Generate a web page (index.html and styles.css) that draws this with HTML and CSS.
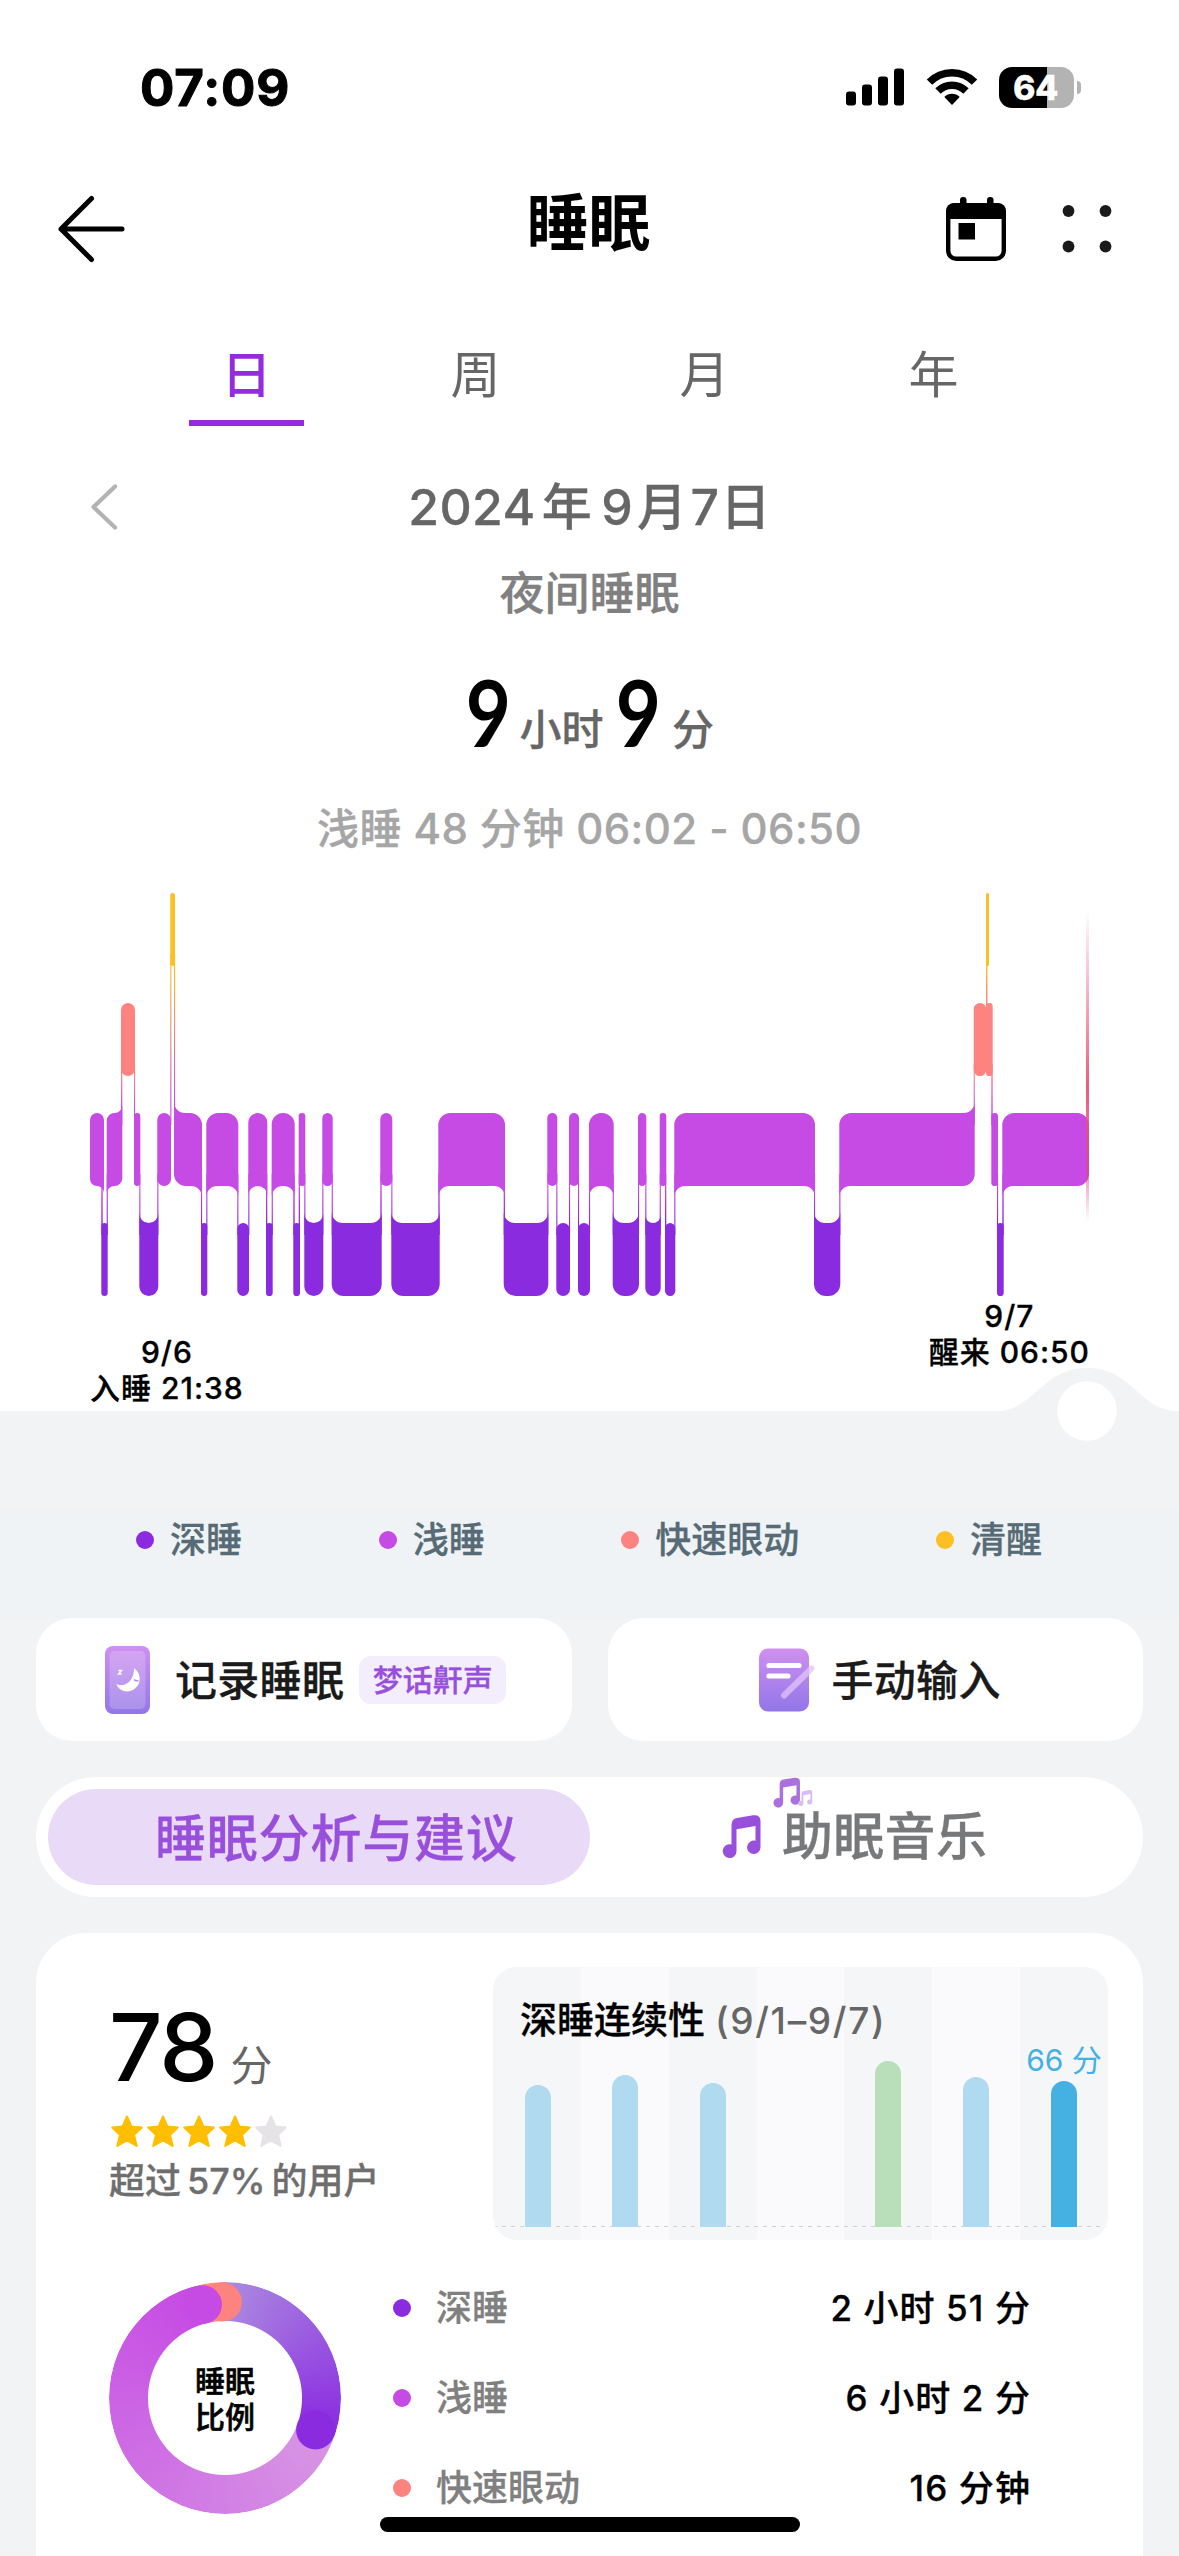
FILE: index.html
```html
<!DOCTYPE html>
<html lang="zh-CN">
<head>
<meta charset="utf-8">
<title>睡眠</title>
<link rel="stylesheet" href="styles.css">
</head>
<body>
<div class="screen">
  <header class="status">
    <span class="clock">07:09</span>
    <span class="status-icons">
      <svg class="signal" width="58" height="38" viewBox="0 0 58 38"><rect x="0" y="23.500" width="10" height="14" rx="3"/><rect x="16" y="16.500" width="10" height="21" rx="3"/><rect x="32" y="8.500" width="10" height="29" rx="3"/><rect x="48" y="0.500" width="10" height="37" rx="3"/></svg>
      <svg class="wifi" width="52" height="38" viewBox="0 0 52 38"><g fill="none" stroke="#000" stroke-width="7.600"><path d="M3.500 14.200A31.500 31.500 0 0 1 48.500 14.200"/><path d="M12 23A19.800 19.800 0 0 1 40 23"/></g><path d="M18.300 29A11 11 0 0 1 33.700 29L26 37z"/></svg>
      <span class="battery"><span class="battery-body">64</span><i class="battery-nub"></i></span>
    </span>
  </header>

  <nav class="nav">
    <svg class="back" width="70" height="70" viewBox="0 0 70 70"><path d="M35.500 4.500L5 35l30.500 30.500M5 35h61" fill="none" stroke="#000" stroke-width="5" stroke-linecap="round" stroke-linejoin="round"/></svg>
    <h1 class="title">睡眠</h1>
    <div class="nav-actions">
      <svg width="60" height="64" viewBox="0 0 60 64"><rect x="2.200" y="8.200" width="55.600" height="53.600" rx="8" fill="none" stroke="#000" stroke-width="4.400"/><path d="M0 22V14a8 8 0 0 1 8-8h44a8 8 0 0 1 8 8v8z"/><rect x="14" y="0" width="6.500" height="12" rx="3"/><rect x="41" y="0" width="6.500" height="12" rx="3"/><rect x="12.500" y="26" width="16.500" height="16.500"/></svg>
      <svg width="50" height="48" viewBox="0 0 50 48" fill="#1a1a1a"><circle cx="6.500" cy="6" r="5.900"/><circle cx="43.500" cy="6" r="5.900"/><circle cx="6.500" cy="41.500" r="5.900"/><circle cx="43.500" cy="41.500" r="5.900"/></svg>
    </div>
  </nav>

  <div class="tabs">
    <div class="tab tab-on">日</div><div class="tab">周</div><div class="tab">月</div><div class="tab">年</div>
  </div>

  <div class="date-row">
    <svg class="prev" width="28" height="46" viewBox="0 0 28 46"><path d="M25 2.500L3.500 23 25 43.500" fill="none" stroke="#b3b3b3" stroke-width="4.200" stroke-linecap="round" stroke-linejoin="round"/></svg>
    <span class="date">2024<b class="year">年</b>9<b class="month">月</b>7<b class="date-day">日</b></span>
  </div>
  <div class="kind">夜间睡眠</div>
  <div class="total"><span class="big hours">9</span><span class="unit">小时</span><span class="big">9</span><span class="unit">分</span></div>
  <div class="detail">浅睡 48 分钟 06:02 - 06:50</div>

  <svg class="stages" id="stages" width="1179" height="421" viewBox="0 877 1179 421">
    <defs>
      <linearGradient id="cursor" x1="0" y1="0" x2="0" y2="1"><stop offset="0" stop-color="#ec5a7c" stop-opacity="0"/><stop offset=".57" stop-color="#ec5a7c"/><stop offset=".85" stop-color="#d8487c" stop-opacity=".55"/><stop offset="1" stop-color="#ec5a7c" stop-opacity="0"/></linearGradient>
    </defs>
  </svg>
  <div class="ends">
    <div class="end end-start">9/6<br>入睡 21:38</div>
    <div class="end">9/7<br>醒来 06:50</div>
  </div>

  <main class="lower">
    <svg class="handle" width="184" height="76" viewBox="0 0 184 76"><path d="M0 43.500C40 43 46 0 92 0S144 43 184 43.500z" fill="#f1f3f5"/><circle cx="92" cy="43" r="29.800" fill="#fff"/></svg>
    <div class="legend">
      <span class="key deep">深睡</span><span class="key light">浅睡</span><span class="key rem">快速眼动</span><span class="key awake">清醒</span>
    </div>

    <div class="actions">
      <div class="action">
        <svg class="phone" width="46" height="68" viewBox="0 0 46 68">
          <defs><linearGradient id="lilac" x1="0" y1="0" x2="0" y2="1"><stop offset="0" stop-color="#cf90f0"/><stop offset="1" stop-color="#9276e8"/></linearGradient></defs>
          <rect width="45" height="68" rx="8" fill="url(#lilac)"/><rect x="4.500" y="5" width="36" height="58" rx="5" fill="#fff" opacity=".2"/>
          <path d="M29 22c8 6 7 16 1 20.500C24 47.500 14 46 11.500 38c7 4 18-2 17.500-16z" fill="#fff"/><path d="M29 33.500q2 2 4.500 1" stroke="#b08ae8" stroke-width="1.500" fill="none"/><path d="M13.500 24.500h3l-3 3.500h3" fill="none" stroke="#fff" stroke-width="1.400"/>
        </svg>
        <span class="action-text">记录睡眠</span><span class="tag">梦话鼾声</span>
      </div>
      <div class="action action-manual">
        <svg class="note-pad" width="56" height="64" viewBox="0 0 56 64"><rect y="0.500" width="50" height="63" rx="9" fill="url(#lilac)"/><path d="M10 17.500h30M10 28h19" stroke="#fff" stroke-width="5.200" stroke-linecap="round"/><path d="M25 47.500L52.500 20.500" stroke="#e2c4fa" stroke-opacity=".75" stroke-width="6" stroke-linecap="round"/></svg>
        <span class="action-text">手动输入</span>
      </div>
    </div>

    <div class="switch">
      <div class="switch-on">睡眠分析与建议</div>
      <div class="switch-off">
        <svg width="40" height="44" viewBox="0 0 40 44"><path d="M9.500 33V10q0-6 5.500-7L31 .3Q38.500-.5 38.500 6v26a6.700 6.700 0 1 1-5-6.200V11l-19 3.200V36a6.900 6.900 0 1 1-5-6.500z" fill="#984fdc"/></svg>
        <span>助眠音乐</span>
        <svg class="notes" width="42" height="32" viewBox="0 0 42 32"><path d="M9.500 33V10q0-6 5.500-7L31 .3Q38.500-.5 38.500 6v26a6.700 6.700 0 1 1-5-6.200V11l-19 3.200V36a6.900 6.900 0 1 1-5-6.500z" transform="translate(0 .5) scale(.7)" fill="#aa70de"/><path d="M9.500 33V10q0-6 5.500-7L31 .3Q38.500-.5 38.500 6v26a6.700 6.700 0 1 1-5-6.200V11l-19 3.200V36a6.900 6.900 0 1 1-5-6.500z" transform="translate(25 13) scale(.37)" fill="#d8bdf2"/></svg>
      </div>
    </div>

    <section class="card">
      <div class="card-top">
        <div class="score-box">
          <div class="score"><b>78</b><span>分</span></div>
          <svg class="stars" width="180" height="34" viewBox="0 0 180 34">
            <defs><path id="star" d="M17 1.500l4.400 10 10.400 1-7.700 7.400L26.700 31 17 25.400 7.300 31l2.600-11.100-7.700-7.400 10.400-1z" stroke-width="2" stroke-linejoin="round"/></defs>
            <g fill="#ffbf00" stroke="#ffbf00"><use href="#star"/><use href="#star" x="36"/><use href="#star" x="72"/><use href="#star" x="108"/></g><use href="#star" x="144" fill="#e5e3e5" stroke="#e5e3e5"/>
          </svg>
          <div class="rank">超过<i></i>57%<i></i>的用户</div>
        </div>
        <div class="trend">
          <div class="trend-title">深睡连续性 <span>(9/1–9/7)</span></div>
          <div class="trend-bars">
            <div class="day"><i style="height:142px"></i></div><div class="day"><i style="height:152px"></i></div><div class="day"><i style="height:144px"></i></div><div class="day"></div><div class="day"><i class="good" style="height:166px"></i></div><div class="day"><i style="height:150px"></i></div><div class="day"><em>66 分</em><i class="now" style="height:146px"></i></div>
          </div>
        </div>
      </div>
      <div class="card-bottom">
        <div class="donut">
          <div class="ring"></div>
          <svg class="caps" width="232" height="232" viewBox="0 0 232 232"><circle cx="206.500" cy="148" r="19.400" fill="#8a2be0"/><circle cx="113.500" cy="20" r="19.400" fill="#fd8380"/><circle cx="93.600" cy="22.600" r="19.400" fill="#c64ae4"/></svg>
          <div class="donut-text">睡眠<br>比例</div>
        </div>
        <div class="rows">
          <div class="row"><span class="key deep">深睡</span><b>2 小时 51 分</b></div>
          <div class="row"><span class="key light">浅睡</span><b>6 小时 2 分</b></div>
          <div class="row"><span class="key rem">快速眼动</span><b>16 分钟</b></div>
        </div>
      </div>
    </section>
  </main>
  <div class="home-bar"></div>
</div>
<script src="stages.js"></script>
</body>
</html>
```
FILE: styles.css
```css
* { box-sizing: border-box; }
body {
  margin: 0;
  background: #fff;
  color: #000;
  font-family: Inter, "Noto Sans CJK SC", sans-serif;
  font-weight: 500;
  -webkit-text-stroke: .3px currentColor;
}
svg { display: block; flex: none; }
i, em { font-style: normal; }
.screen { position: relative; width: 1179px; height: 2556px; overflow: hidden; }

/* status bar */
.status { height: 174px; display: flex; justify-content: space-between; align-items: center; padding: 0 98px 0 140px; }
.clock { font-size: 51px; font-weight: 700; line-height: 60px; letter-spacing: .9px; -webkit-text-stroke-width: 1px; padding-top: 1px; }
.status-icons { display: flex; align-items: center; }
.wifi { margin-left: 22px; }
.battery { display: flex; align-items: center; margin-left: 21px; gap: 3px; }
.battery-body {
  width: 75px; height: 41px; border-radius: 13px; line-height: 41px; text-align: center;
  background: linear-gradient(90deg, #000 64%, #b3b3b3 64%);
  color: #fff; font-size: 34px; font-weight: 800; letter-spacing: -.5px; text-indent: -2px;
}
.battery-nub { width: 4px; height: 13px; border-radius: 0 4px 4px 0; background: #b3b3b3; }

/* navigation */
.nav { height: 110px; display: grid; grid-template-columns: 1fr auto 1fr; align-items: center; padding: 0 67px 0 56px; }
.title { margin: 0 0 0 9px; padding-bottom: 11px; font-size: 62px; line-height: 70px; font-weight: 600; -webkit-text-stroke-width: 0; }
.nav-actions { display: flex; justify-content: flex-end; align-items: center; gap: 56px; }

.tabs { height: 142px; padding: 46px 131px 0 132px; display: grid; grid-template-columns: repeat(4, 1fr); justify-items: center; }
.tab { width: 115px; height: 96px; line-height: 90px; text-align: center; font-size: 50px; font-weight: 400; color: #666; -webkit-text-stroke-width: 0; }
.tab-on { color: #942bdd; border-bottom: 6px solid #942bdd; font-weight: 500; }

/* headline */
.date-row { margin-top: 41px; height: 80px; display: grid; grid-template-columns: 1fr auto 1fr; align-items: center; padding: 0 90px; }
.date { font-size: 50px; line-height: 80px; color: #666; letter-spacing: .4px; }
.date b { font-weight: 500; }
.year { margin: 0 9px 0 6px; }
.month { margin: 0 3px 0 4px; }
.date-day { margin-left: 1px; }
.kind { line-height: 92px; padding-top: 1px; height: 92px; text-align: center; font-size: 45px; color: #808080; }
.total { height: 140px; display: flex; justify-content: center; align-items: baseline; line-height: 145px; }
.big { display: inline-block; font-family: Lato, Inter, sans-serif; font-size: 94px; font-weight: 700; -webkit-text-stroke-width: 0; transform: scale(.83, .97); }
.hours { margin: 0 -3px 0 3px; }
.unit { position: relative; top: -3px; font-size: 42px; color: #666; margin: 0 7px; }
.detail { height: 98px; line-height: 100px; text-align: center; font-size: 42px; letter-spacing: .4px; color: #a6a6a6; }

/* sleep stages */
.ends { height: 113px; padding: 0 90px; display: flex; justify-content: space-between; align-items: flex-start; }
.end { text-align: center; font-size: 30px; line-height: 36px; letter-spacing: 1px; margin-right: -1px; }
.end-start { margin-top: 36px; }

/* lower area */
.lower { position: relative; height: 1145px; padding-top: 99px; background: #f1f3f5; }
.handle { position: absolute; top: -43px; left: 995px; }
.legend { height: 108px; padding: 12px 137px 0 136px; display: flex; justify-content: space-between; align-items: flex-start; background: #eff3f6; }
.key { display: flex; align-items: center; gap: 16px; font-size: 36px; line-height: 36px; color: #566b75; }
.key::before { content: ""; width: 18px; height: 18px; border-radius: 50%; background: currentColor; }
.deep::before { background: #8a2be0; }
.light::before { background: #c64ae4; }
.rem::before { background: #fd8380; }
.awake::before { background: #fdbf22; }

.actions { display: grid; grid-template-columns: 1fr 1fr; gap: 36px; padding: 0 36px; }
.action { height: 123px; border-radius: 36px; background: #fff; display: flex; align-items: center; padding-left: 69px; }
.action-manual { padding-left: 151px; }
.action-text { font-size: 42px; color: #1a1a1a; margin-left: 24px; padding-bottom: 4px; letter-spacing: .3px; }
.action-manual .action-text { margin-left: 17px; }
.tag { margin-left: 15px; width: 147px; height: 48px; border-radius: 12px; background: #f3edfc; color: #984fdc; font-size: 30px; line-height: 48px; text-align: center; }

.switch { margin: 36px 36px 0; height: 120px; padding: 12px; border-radius: 60px; background: #fff; display: flex; font-size: 51px; line-height: 100px; }
.switch-on { width: 542px; height: 96px; border-radius: 48px; background: #e9daf7; color: #984fdc; padding-left: 107px; letter-spacing: .8px; }
.switch-off { position: relative; height: 96px; display: flex; align-items: center; padding-left: 132px; color: #77787a; gap: 20px; letter-spacing: .3px; }
.notes { position: absolute; left: 183px; top: -12px; }

/* score card */
.card { margin: 36px 36px 0; height: 640px; border-radius: 50px 50px 0 0; background: #fff; padding: 34px 35px 0 73px; }
.card-top { display: flex; justify-content: space-between; }
.score { display: flex; align-items: baseline; height: 148px; line-height: 160px; -webkit-text-stroke-width: 0; }
.score b { font-size: 94px; font-weight: 500; letter-spacing: -2px; }
.score span { margin-left: 14px; font-size: 42px; font-weight: 400; color: #666; }
.stars { margin-left: 1px; }
.rank { font-size: 36px; line-height: 64px; color: #6e6e6e; }
.rank i { display: inline-block; width: 6px; }
.trend {
  width: 615px; height: 273px; border-radius: 24px; overflow: hidden;
  background: repeating-linear-gradient(90deg, #f5f6f8 0 87.86px, #fafafc 87.86px 175.72px);
}
.trend-title { height: 84px; padding-left: 27px; line-height: 108px; font-size: 37px; white-space: pre; }
.trend-title span { color: #666; letter-spacing: 1.7px; -webkit-text-stroke-width: 0; }
.trend-bars { height: 176px; padding-left: 1px; display: grid; grid-template-columns: repeat(7, 1fr); grid-template-rows: 176px; background: repeating-linear-gradient(90deg, #cfd1d6 0 4px, transparent 4px 9px) 0 100% / 100% 1px no-repeat; }
.day { display: flex; flex-direction: column; justify-content: flex-end; align-items: center; }
.day i { flex: none; width: 26px; border-radius: 13px 13px 0 0; background: #b0daef; }
.day i.good { background: #b9deba; }
.day i.now { background: #45b0e2; }
.day em { flex: none; width: 100px; margin: 0 -6px; text-align: center; font-size: 30px; line-height: 42px; font-weight: 400; color: #45b0e2; -webkit-text-stroke-width: 0; }

.card-bottom { display: flex; padding-top: 42px; }
.donut { position: relative; width: 232px; height: 232px; display: grid; place-items: center; }
.ring, .caps { grid-area: 1 / 1; }
.caps { position: relative; }
.ring {
  width: 232px; height: 232px; border-radius: 50%;
  background: conic-gradient(#ab8ae0 0deg, #8a2be0 108deg, #8a2be0 110deg, #d793e3 110deg, #d690e4 130deg, #c64ae4 346deg, #fb9a78 346deg, #fd8380 358deg, #fd8380 360deg);
  -webkit-mask: radial-gradient(circle, transparent 76.500px, #000 77.500px);
  mask: radial-gradient(circle, transparent 76.500px, #000 77.500px);
}
.donut-text { grid-area: 1 / 1; font-size: 30px; line-height: 36px; text-align: center; padding-top: 1px; -webkit-text-stroke-width: .6px; }
.rows { flex: 1; margin: -19px 78px 0 52px; }
.row { height: 90px; display: flex; justify-content: space-between; align-items: center; font-size: 36px; }
.row .key { gap: 25px; color: #808080; }
.row b { font-weight: 500; font-size: 35px; letter-spacing: 1.1px; padding-bottom: 5px; margin-right: -1px; }
.home-bar { position: absolute; left: 380px; top: 2517px; width: 420px; height: 15px; border-radius: 8px; background: #000; }
```
FILE: stages.js
```js
// Sleep stage timeline: [stage, start x, end x]
const LEVELS = {
  W: { y: 893, color: '#fdbf22' },
  R: { y: 1003, color: '#fd8380' },
  L: { y: 1113, color: '#c64ae4' },
  D: { y: 1223, color: '#8a2be0' }
};
const H = 73;
const data = [
  ['L', 90, 104], ['D', 101.3, 107.7], ['L', 106.7, 122.3], ['R', 121, 135], ['L', 134, 140.3],
  ['D', 139.3, 158.3], ['L', 157.3, 171], ['W', 170.3, 175], ['L', 174, 202], ['D', 201, 207.3],
  ['L', 206.3, 238.3], ['D', 237.3, 249], ['L', 248.3, 267.3], ['D', 266, 272.7], ['L', 271.7, 294.7],
  ['D', 293.3, 300], ['L', 298.7, 305.3], ['D', 304.3, 323.3], ['L', 322.3, 332.7], ['D', 331.7, 381.7],
  ['L', 380.3, 392.3], ['D', 391.3, 439.7], ['L', 438.3, 505], ['D', 503.7, 548.3], ['L', 547.3, 557.3],
  ['D', 556.3, 570], ['L', 569, 579], ['D', 578, 590], ['L', 589, 613.7], ['D', 612.7, 639],
  ['L', 638, 646.3], ['D', 645.3, 660.7], ['L', 659.7, 666.3], ['D', 665, 675.3], ['L', 674.3, 815],
  ['D', 814, 840.3], ['L', 839.3, 974.7], ['R', 973.7, 986.3], ['W', 986, 989], ['R', 986, 992.7],
  ['L', 991.3, 998], ['D', 997, 1003.7], ['L', 1002.3, 1089]
];
const svg = document.getElementById('stages');
let defs = '';
let out = '';

// thin gradient links between neighbouring stages
data.slice(1).forEach((cur, k) => {
  const prev = data[k];
  const [hi, lo] = LEVELS[prev[0]].y < LEVELS[cur[0]].y ? [prev[0], cur[0]] : [cur[0], prev[0]];
  const top = LEVELS[hi].y + H;
  const bottom = LEVELS[lo].y;
  const x = Math.min(cur[1], prev[2]);
  const w = Math.max(1.1, Math.abs(prev[2] - cur[1]));
  defs += `<linearGradient id="g${k}" gradientUnits="userSpaceOnUse" x1="0" x2="0" y1="${top}" y2="${bottom}"><stop stop-color="${LEVELS[hi].color}"/><stop offset="1" stop-color="${LEVELS[lo].color}"/></linearGradient>`;
  out += `<rect x="${x}" y="${top - 12}" width="${Math.min(w, 1.4)}" height="${bottom - top + 24}" fill="url(#g${k})"/>`;
});

// bars: rounded outer corners, concave flares on the corners that meet a link
data.forEach(([s, a, b], k) => {
  const { y, color } = LEVELS[s];
  const w = b - a;
  const r = Math.min(12, w / 2);
  const f = w >= 14 && s !== 'R' ? Math.min(11, w / 2) : 0;
  const side = n => !data[n] ? 0 : Math.sign(LEVELS[data[n][0]].y - y);
  const l = f ? side(k - 1) : 0;
  const t = f ? side(k + 1) : 0;
  const e = y + H;
  const R = (x, yy) => `A${r} ${r} 0 0 1 ${x} ${yy}`;
  const F = (x, yy) => `A${f} ${f} 0 0 0 ${x} ${yy}`;
  let p = l < 0 ? `M${a} ${y - f}${F(a + f, y)}` : `M${a} ${y + r}${R(a + r, y)}`;
  p += t < 0 ? `L${b - f} ${y}${F(b, y - f)}` : `L${b - r} ${y}${R(b, y + r)}`;
  p += t > 0 ? `L${b} ${e + f}${F(b - f, e)}` : `L${b} ${e - r}${R(b - r, e)}`;
  p += l > 0 ? `L${a + f} ${e}${F(a, e + f)}Z` : `L${a + r} ${e}${R(a, e - r)}Z`;
  out += `<path d="${p}" fill="${color}"/>`;
});

out += '<rect x="1086" y="910" width="3" height="312" fill="url(#cursor)"/>';
svg.innerHTML += `<defs>${defs}</defs>${out}`;
```
